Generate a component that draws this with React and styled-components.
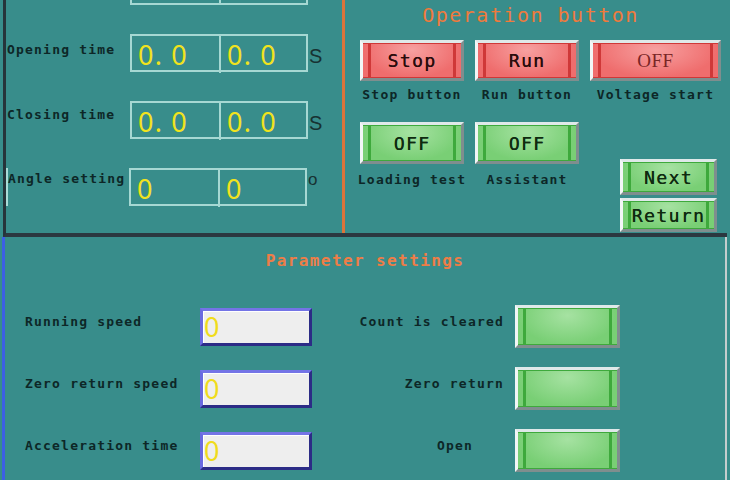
import React from "react";
import styled, { createGlobalStyle, css } from "styled-components";

const GlobalStyle = createGlobalStyle`
  *, *::before, *::after { box-sizing: border-box; }
  html, body { margin: 0; padding: 0; background: #388d8b; }
  #root { width: 730px; height: 480px; }
`;

const TEAL = "#388d8b";
const INK = "#0d2727";

const Screen = styled.div`
  width: 730px;
  height: 480px;
  overflow: hidden;
  display: flex;
  flex-direction: column;
  background: ${TEAL};
  font-family: "DejaVu Sans Mono", "Liberation Mono", monospace;
`;

const TopSection = styled.section`
  display: flex;
  width: 724px;
  height: 237px;
  margin-left: 3px;
  border-left: 3px solid #26343a;
  border-bottom: 4px solid #2b3840;
  flex: none;
`;

const LeftPanel = styled.div`
  width: 339px;
  height: 100%;
  overflow: hidden;
  display: flex;
  flex-direction: column;
  gap: 29px;
  padding-left: 1px;
  border-right: 3px solid #dc743a;
`;

const FieldRow = styled.div`
  display: flex;
  align-items: stretch;
  height: 38px;
  flex: none;
  ${(p) => p.$shift && css`margin-top: ${p.$shift}px;`}
`;

const Label = styled.div`
  font-weight: bold;
  font-size: 13px;
  line-height: 15px;
  letter-spacing: 1.2px;
  color: ${INK};
  white-space: nowrap;
`;

const RowLabel = styled(Label)`
  width: 123px;
  padding-top: ${(p) => p.$top ?? 7}px;
  ${(p) => p.$cursor && css`border-left: 2px solid #a9dcd7; margin-left: -1px; padding-left: 0;`}
`;

const ValueBox = styled.div`
  display: grid;
  grid-template-columns: 1fr 1fr;
  width: 178px;
  border: 2px solid #a6d8d3;
`;

const ValueCell = styled.div`
  display: flex;
  align-items: center;
  padding-left: 6px;
  font-family: "Noto Sans", "DejaVu Sans", sans-serif;
  font-size: 27px;
  letter-spacing: 1.2px;
  color: #f1e31d;
  white-space: pre;
  & + & { border-left: 2px solid #a6d8d3; }
`;

const Unit = styled.span`
  width: 12px;
  font-family: "Liberation Sans", "DejaVu Sans", sans-serif;
  color: #173232;
  margin-left: 1px;
  ${(p) =>
    p.$degree
      ? css`font-size: 17px; line-height: 17px; padding-top: 3px;`
      : css`font-size: 20px; align-self: center; margin-top: 6px;`}
`;

const RightPanel = styled.div`
  flex: 1;
  display: flex;
  flex-direction: column;
  padding: 3px 0 0 15px;
`;

const PanelTitle = styled.div`
  text-align: center;
  font-size: 20px;
  line-height: 24px;
  letter-spacing: 1.5px;
  color: #f07a3c;
  padding-right: 26px;
  margin-bottom: 13px;
`;

const ButtonRow = styled.div`
  display: flex;
  gap: 11px;
  align-items: flex-start;
  ${(p) => p.$top && css`margin-top: ${p.$top}px;`}
`;

const Cell = styled.div`
  width: ${(p) => p.$w}px;
  display: flex;
  flex-direction: column;
  align-items: center;
  gap: ${(p) => p.$gap ?? 6}px;
`;

const palettes = {
  red: { fill: "#ef6d6d", light: "#f7a0a0", strip: "#cf3838", text: "#2a0c0c" },
  green: { fill: "#79cf75", light: "#a6e2a2", strip: "#3ea93c", text: "#0f2a10" },
};

const PanelButton = styled.div`
  width: ${(p) => p.$w}px;
  height: ${(p) => p.$h}px;
  flex: none;
  display: flex;
  align-items: center;
  justify-content: center;
  border-style: solid;
  border-width: 3px;
  border-color: #dfe9e9 #7f8e8e #7f8e8e #f2f6f6;
  background:
    linear-gradient(
      90deg,
      transparent 0 5px,
      ${(p) => palettes[p.$tone].strip} 5px 8px,
      transparent 8px calc(100% - 8px),
      ${(p) => palettes[p.$tone].strip} calc(100% - 8px) calc(100% - 5px),
      transparent calc(100% - 5px)
    ),
    radial-gradient(ellipse at 50% 20%, ${(p) => palettes[p.$tone].light} 0%, ${(p) => palettes[p.$tone].fill} 70%);
  box-shadow: inset 0 1px 0 ${(p) => palettes[p.$tone].strip}, inset 0 -1px 0 ${(p) => palettes[p.$tone].strip};
  font-size: 18px;
  letter-spacing: 1.4px;
  color: ${(p) => palettes[p.$tone].text};
  text-shadow: 0.3px 0 0 currentColor;
  ${(p) =>
    p.$serif &&
    css`
      font-family: "Liberation Serif", serif;
      font-size: 19px;
      letter-spacing: 0.5px;
      color: #7a2626;
      text-shadow: none;
    `}
`;

const NavColumn = styled.div`
  display: flex;
  flex-direction: column;
  gap: 3px;
  margin-left: 30px;
  margin-top: 37px;
`;

const BottomSection = styled.section`
  flex: 1;
  width: 725px;
  margin-left: 2px;
  border-left: 3px solid #3c5fe6;
  border-right: 2px solid #c4cece;
  display: flex;
  flex-direction: column;
  padding: 14px 0 0 20px;
`;

const SectionTitle = styled.div`
  text-align: center;
  font-size: 16px;
  font-weight: bold;
  line-height: 20px;
  letter-spacing: 1.4px;
  color: #ee7d47;
  padding-right: 20px;
  margin-bottom: 34px;
`;

const ParamGrid = styled.div`
  display: grid;
  grid-template-columns: 175px 112px 203px 105px;
  grid-auto-rows: 43px;
  row-gap: 19px;
  align-items: center;
`;

const ParamLabel = styled(Label)`
  margin-bottom: 10px;
  ${(p) => p.$right && css`justify-self: end; padding-right: ${p.$inset ?? 11}px;`}
`;

const InputBox = styled.div`
  height: 38px;
  display: flex;
  align-items: center;
  border-style: solid;
  border-width: 3px;
  border-color: #7474e6 #2c2c86 #2c2c86 #6a6ae0;
  box-shadow: inset 1px 1px 0 #ffffff;
  background: #eeeeee;
  font-family: "Noto Sans", "DejaVu Sans", sans-serif;
  font-size: 27px;
  color: #f0dc1c;
  padding-left: 1px;
`;

const rows = [
  { label: "", a: "", b: "", unit: "", shift: -33 },
  { label: "Opening time", a: "0. 0", b: "0. 0", unit: "S", top: 8 },
  { label: "Closing time", a: "0. 0", b: "0. 0", unit: "S", top: 6 },
  { label: "Angle setting", a: "0", b: "0", unit: "o", degree: true, top: 3, cursor: true },
];

const params = [
  { left: "Running speed", right: "Count is cleared" },
  { left: "Zero return speed", right: "Zero return" },
  { left: "Acceleration time", right: "Open", inset: 42 },
];

export default function App() {
  return (
    <>
      <GlobalStyle />
      <Screen>
        <TopSection>
          <LeftPanel>
            {rows.map((r, i) => (
              <FieldRow key={i} $shift={r.shift}>
                <RowLabel $top={r.top} $cursor={r.cursor}>{r.label}</RowLabel>
                <ValueBox>
                  <ValueCell>{r.a}</ValueCell>
                  <ValueCell>{r.b}</ValueCell>
                </ValueBox>
                <Unit $degree={r.degree}>{r.unit}</Unit>
              </FieldRow>
            ))}
          </LeftPanel>
          <RightPanel>
            <PanelTitle>Operation button</PanelTitle>
            <ButtonRow>
              <Cell $w={104}>
                <PanelButton $tone="red" $w={104} $h={41}>Stop</PanelButton>
                <Label>Stop button</Label>
              </Cell>
              <Cell $w={104}>
                <PanelButton $tone="red" $w={104} $h={41}>Run</PanelButton>
                <Label>Run button</Label>
              </Cell>
              <Cell $w={131}>
                <PanelButton $tone="red" $w={131} $h={41} $serif>OFF</PanelButton>
                <Label>Voltage start</Label>
              </Cell>
            </ButtonRow>
            <ButtonRow $top={20}>
              <Cell $w={104} $gap={8}>
                <PanelButton $tone="green" $w={104} $h={42}>OFF</PanelButton>
                <Label>Loading test</Label>
              </Cell>
              <Cell $w={104} $gap={8}>
                <PanelButton $tone="green" $w={104} $h={42}>OFF</PanelButton>
                <Label>Assistant</Label>
              </Cell>
              <NavColumn>
                <PanelButton $tone="green" $w={97} $h={36}>Next</PanelButton>
                <PanelButton $tone="green" $w={97} $h={34}>Return</PanelButton>
              </NavColumn>
            </ButtonRow>
          </RightPanel>
        </TopSection>
        <BottomSection>
          <SectionTitle>Parameter settings</SectionTitle>
          <ParamGrid>
            {params.map((p, i) => (
              <React.Fragment key={i}>
                <ParamLabel>{p.left}</ParamLabel>
                <InputBox>0</InputBox>
                <ParamLabel $right $inset={p.inset}>{p.right}</ParamLabel>
                <PanelButton $tone="green" $w={105} $h={43} />
              </React.Fragment>
            ))}
          </ParamGrid>
        </BottomSection>
      </Screen>
    </>
  );
}
